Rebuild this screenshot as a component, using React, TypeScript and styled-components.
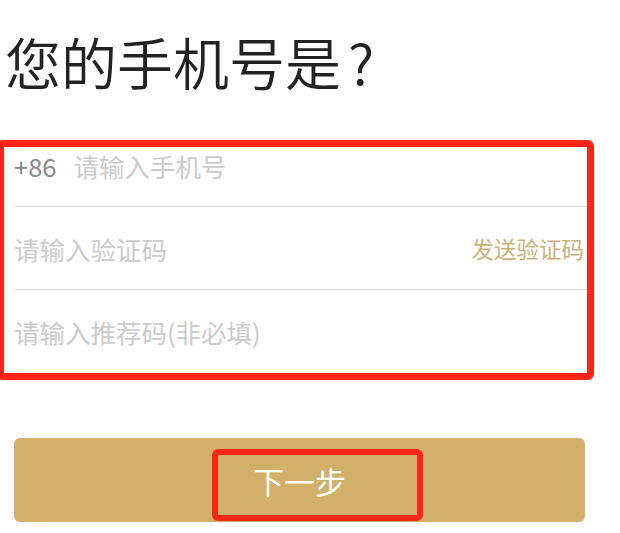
import React from "react";
import styled, { createGlobalStyle } from "styled-components";

const GlobalStyle = createGlobalStyle`
  html, body {
    margin: 0;
    padding: 0;
    background: #ffffff;
  }
  body {
    font-family: "Noto Sans CJK SC", "Noto Sans", sans-serif;
    overflow: hidden;
  }
`;

const Page = styled.div`
  width: 620px;
  height: 533px;
  display: flex;
  flex-direction: column;
  box-sizing: border-box;
  padding-top: 33px;
`;

const Title = styled.h1`
  margin: 0 0 0 5px;
  font-size: 56px;
  line-height: 56px;
  font-weight: 350;
  color: #222222;
  letter-spacing: 0;
`;

const TitleMark = styled.span`
  margin-left: 7px;
`;

const FormWrap = styled.div`
  position: relative;
  margin: 35px 30px 0 14px;
  display: flex;
  flex-direction: column;
`;

const Row = styled.div<{ $divider?: boolean }>`
  height: 82px;
  display: flex;
  align-items: center;
  justify-content: space-between;
  padding-right: 6px;
  border-bottom: 1px solid ${(p) => (p.$divider ? "#e3e3e3" : "transparent")};
`;

const Field = styled.div`
  display: flex;
  align-items: center;
  gap: 17px;
  font-size: 25.5px;
`;

const Prefix = styled.span`
  color: #8a8a8a;
`;

const Placeholder = styled.span`
  color: #cbcbcb;
`;

const SendLink = styled.span`
  color: #cdb07a;
  font-size: 22.5px;
`;

const Annotation = styled.div<{ $top: number; $left: number; $w: number; $h: number; $bw: number }>`
  position: absolute;
  top: ${(p) => p.$top}px;
  left: ${(p) => p.$left}px;
  width: ${(p) => p.$w}px;
  height: ${(p) => p.$h}px;
  box-sizing: border-box;
  border: ${(p) => p.$bw}px solid #fe2418;
  border-radius: 6px;
  pointer-events: none;
`;

const NextButton = styled.button`
  position: relative;
  margin: 65px 0 0 14px;
  width: 571px;
  height: 84px;
  border: none;
  border-radius: 6px;
  background: #d3b06a;
  color: #ffffff;
  font-family: "Noto Sans CJK SC", "Noto Sans", sans-serif;
  font-size: 31px;
  padding: 0;
  display: flex;
  align-items: center;
  justify-content: center;
`;

export default function App() {
  return (
    <>
      <GlobalStyle />
      <Page>
        <Title>
          您的手机号是<TitleMark>?</TitleMark>
        </Title>
        <FormWrap>
          <Row $divider>
            <Field>
              <Prefix>+86</Prefix>
              <Placeholder>请输入手机号</Placeholder>
            </Field>
          </Row>
          <Row $divider>
            <Field>
              <Placeholder>请输入验证码</Placeholder>
            </Field>
            <SendLink>发送验证码</SendLink>
          </Row>
          <Row>
            <Field>
              <Placeholder>请输入推荐码(非必填)</Placeholder>
            </Field>
          </Row>
          <Annotation $top={16} $left={-17} $w={597} $h={240} $bw={7} />
        </FormWrap>
        <NextButton>
          下一步
          <Annotation $top={11} $left={198} $w={211} $h={72} $bw={6} />
        </NextButton>
      </Page>
    </>
  );
}
